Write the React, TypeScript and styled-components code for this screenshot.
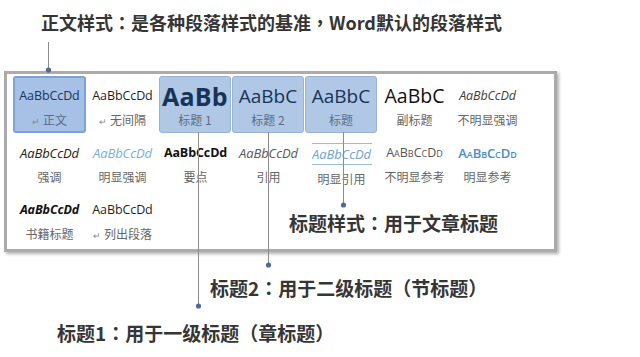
import React from "react";
import styled, { createGlobalStyle, css } from "styled-components";

const GlobalStyle = createGlobalStyle`
  html, body {
    margin: 0;
    padding: 0;
    background: #ffffff;
  }
  body {
    font-family: "Noto Sans CJK SC", "Noto Sans", sans-serif;
  }
`;

const Page = styled.div`
  position: relative;
  width: 640px;
  height: 357px;
  overflow: hidden;
  background: #ffffff;
  display: flex;
  flex-direction: column;
`;

const Caption = styled.div<{ $left: number; $top: number; $size?: number }>`
  margin-left: ${(p) => p.$left}px;
  margin-top: ${(p) => p.$top}px;
  font-family: "Noto Sans CJK TC", "Noto Sans CJK SC", sans-serif;
  font-weight: 700;
  font-size: ${(p) => p.$size ?? 19}px;
  line-height: 24px;
  color: #353535;
  white-space: nowrap;
`;

const Frame = styled.div`
  margin-left: 4px;
  margin-top: 37px;
  width: 541px;
  height: 173px;
  border: 3px solid #ababab;
  box-shadow: 2px 2px 3px rgba(0, 0, 0, 0.3);
  background: #ffffff;
  padding: 2px 0 0 6px;
  box-sizing: content-box;
`;

const Gallery = styled.div`
  display: grid;
  grid-template-columns: repeat(7, 73px);
  grid-auto-rows: 57px;
`;

type TileKind = "plain" | "selected" | "heading";

const Tile = styled.div<{ $kind: TileKind }>`
  display: flex;
  flex-direction: column;
  align-items: center;
  padding-top: 8px;
  box-sizing: border-box;
  border-radius: 3px;
  overflow: hidden;
  ${(p) =>
    p.$kind === "selected" &&
    css`
      background: #a6c1e5;
      border: 2px solid #7ea2d6;
      padding-top: 6px;
    `}
  ${(p) =>
    p.$kind === "heading" &&
    css`
      background: #b0c8e5;
      border: 1px solid #98b3d5;
      padding-top: 7px;
      margin-right: 1px;
    `}
`;

type SampleStyle =
  | "body"
  | "h1"
  | "big"
  | "bigDark"
  | "subtle"
  | "emphasis"
  | "intense"
  | "strong"
  | "quote"
  | "intenseQuote"
  | "subtleRef"
  | "intenseRef"
  | "book";

const Sample = styled.div<{ $look: SampleStyle; $navy?: boolean }>`
  height: 24px;
  line-height: 24px;
  width: 100%;
  text-align: center;
  white-space: nowrap;
  overflow: hidden;
  font-family: "Open Sans", "Noto Sans", sans-serif;
  font-size: 12.5px;
  color: ${(p) => (p.$navy ? "#1b3556" : "#1e1e1e")};
  letter-spacing: -0.1px;
  ${(p) => {
    switch (p.$look) {
      case "h1":
        return css`
          font-size: 25px;
          font-weight: 700;
          text-align: left;
          padding-left: 4px;
          color: #173458;
          letter-spacing: 0.2px;
        `;
      case "big":
        return css`
          font-size: 19px;
          color: #173458;
          letter-spacing: 0;
        `;
      case "bigDark":
        return css`
          font-size: 19.5px;
          color: #111;
          letter-spacing: 0;
        `;
      case "subtle":
        return css`
          font-size: 12.5px;
          font-style: italic;
          color: #3e3e3e;
        `;
      case "emphasis":
        return css`
          font-size: 13px;
          font-style: italic;
          color: #222;
        `;
      case "intense":
        return css`
          font-size: 13px;
          font-style: italic;
          color: #7daed8;
        `;
      case "strong":
        return css`
          font-weight: 700;
          color: #111;
        `;
      case "quote":
        return css`
          font-size: 13px;
          font-style: italic;
          color: #585858;
        `;
      case "intenseQuote":
        return css`
          font-size: 13px;
          font-style: italic;
          color: #6ea3d4;
          width: 60px;
          line-height: 20px;
          height: 20px;
          margin-top: 2px;
          margin-bottom: 2px;
          border-top: 1px solid #9bbbd6;
          border-bottom: 1px solid #9bbbd6;
        `;
      case "subtleRef":
        return css`
          font-size: 12.5px;
          font-variant: small-caps;
          color: #555;
          letter-spacing: 0;
        `;
      case "intenseRef":
        return css`
          font-size: 13px;
          font-variant: small-caps;
          font-weight: 600;
          color: #4c8bc9;
        `;
      case "book":
        return css`
          font-weight: 700;
          font-style: italic;
          color: #111;
        `;
      default:
        return css``;
    }
  }}
`;

const Label = styled.div<{ $tinted?: boolean }>`
  margin-top: 4px;
  height: 16px;
  line-height: 16px;
  font-family: "Noto Sans CJK SC", sans-serif;
  font-size: 12px;
  color: ${(p) => (p.$tinted ? "#5b6d84" : "#666")};
  white-space: nowrap;
`;

const Mark = styled.span`
  font-size: 9px;
  color: #888;
  margin-right: 3px;
`;

const InnerCaption = styled.div`
  grid-column: 4 / 8;
  align-self: center;
  margin-left: 57px;
  margin-top: 8px;
  font-family: "Noto Sans CJK TC", "Noto Sans CJK SC", sans-serif;
  font-weight: 700;
  font-size: 19px;
  line-height: 24px;
  color: #353535;
  white-space: nowrap;
`;

const Overlay = styled.svg`
  position: absolute;
  left: 0;
  top: 0;
  pointer-events: none;
`;

type Style = {
  label: string;
  text: string;
  look: SampleStyle;
  kind?: TileKind;
  mark?: boolean;
};

const styles: Style[] = [
  { label: "正文", text: "AaBbCcDd", look: "body", kind: "selected", mark: true },
  { label: "无间隔", text: "AaBbCcDd", look: "body", mark: true },
  { label: "标题 1", text: "AaBb", look: "h1", kind: "heading" },
  { label: "标题 2", text: "AaBbC", look: "big", kind: "heading" },
  { label: "标题", text: "AaBbC", look: "big", kind: "heading" },
  { label: "副标题", text: "AaBbC", look: "bigDark" },
  { label: "不明显强调", text: "AaBbCcDd", look: "subtle" },
  { label: "强调", text: "AaBbCcDd", look: "emphasis" },
  { label: "明显强调", text: "AaBbCcDd", look: "intense" },
  { label: "要点", text: "AaBbCcDd", look: "strong" },
  { label: "引用", text: "AaBbCcDd", look: "quote" },
  { label: "明显引用", text: "AaBbCcDd", look: "intenseQuote" },
  { label: "不明显参考", text: "AaBbCcDd", look: "subtleRef" },
  { label: "明显参考", text: "AaBbCcDd", look: "intenseRef" },
  { label: "书籍标题", text: "AaBbCcDd", look: "book" },
  { label: "列出段落", text: "AaBbCcDd", look: "body", mark: true },
];

const connectors = [
  { x: 48.5, y1: 42, y2: 70 },
  { x: 198.5, y1: 132, y2: 306 },
  { x: 268.5, y1: 132, y2: 265 },
  { x: 343.5, y1: 132, y2: 205 },
];

const App = () => {
  return (
    <>
      <GlobalStyle />
      <Page>
        <Caption $left={41} $top={10} $size={18}>
          正文样式：是各种段落样式的基准，Word默认的段落样式
        </Caption>
        <Frame>
          <Gallery>
            {styles.map((s) => {
              const kind = s.kind ?? "plain";
              return (
                <Tile key={s.label} $kind={kind}>
                  <Sample $look={s.look} $navy={kind !== "plain"}>
                    {s.text}
                  </Sample>
                  <Label $tinted={kind !== "plain"}>
                    {s.mark && <Mark>↵</Mark>}
                    {s.label}
                  </Label>
                </Tile>
              );
            })}
            <InnerCaption>标题样式：用于文章标题</InnerCaption>
          </Gallery>
        </Frame>
        <Caption $left={210} $top={24}>
          标题2：用于二级标题（节标题）
        </Caption>
        <Caption $left={57} $top={21}>
          标题1：用于一级标题（章标题）
        </Caption>
        <Overlay width={640} height={357} viewBox="0 0 640 357">
          {connectors.map((c) => (
            <g key={c.x}>
              <line x1={c.x} y1={c.y1} x2={c.x} y2={c.y2} stroke="#8c8c8c" strokeWidth={1} />
              <circle cx={c.x} cy={c.y2} r={2.6} fill="#4d6b9a" />
            </g>
          ))}
        </Overlay>
      </Page>
    </>
  );
};

export default App;
